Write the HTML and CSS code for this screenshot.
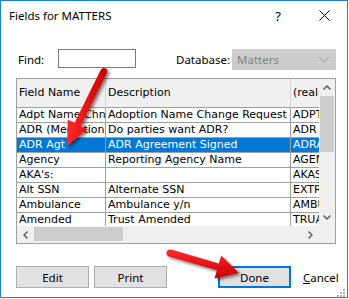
FILE: index.html
```html
<!DOCTYPE html>
<html lang="en">
<head>
  <meta charset="UTF-8">
  <title>Fields for MATTERS</title>
  <link rel="stylesheet" href="styles.css">
</head>
<body>
  <div class="window">
    <div class="titlebar">
      <span class="title">Fields for MATTERS</span>
      <span class="caption-btn">?</span>
      <span class="caption-btn">
        <svg width="11" height="11" viewBox="0 0 11 11"><path d="M0.5 0.5 L10.5 10.5 M10.5 0.5 L0.5 10.5" stroke="#000" stroke-width="1"/></svg>
      </span>
    </div>

    <div class="find-row">
      <span class="find-label">Find:</span>
      <input type="text" class="find-input">
      <span class="db-label">Database:</span>
      <div class="db-select">
        <span class="db-value">Matters</span>
        <svg width="10" height="6" viewBox="0 0 10 6"><path d="M0.5 0.5 L5 5 L9.5 0.5" fill="none" stroke="#a3a3a3" stroke-width="1"/></svg>
      </div>
    </div>

    <div class="grid">
      <div class="viewport">
        <div class="row head">
          <div class="cell">Field Name</div>
          <div class="cell">Description</div>
          <div class="cell">(real name)</div>
        </div>
        <div class="row"><div class="cell">Adpt Name Chng</div><div class="cell">Adoption Name Change Request</div><div class="cell">ADPTNAME</div></div>
        <div class="row"><div class="cell">ADR (Mediation)</div><div class="cell">Do parties want ADR?</div><div class="cell">ADR</div></div>
        <div class="row selected"><div class="cell">ADR Agt</div><div class="cell">ADR Agreement Signed</div><div class="cell">ADRAGT</div></div>
        <div class="row"><div class="cell">Agency</div><div class="cell">Reporting Agency Name</div><div class="cell">AGENCY</div></div>
        <div class="row"><div class="cell">AKA's:</div><div class="cell"></div><div class="cell">AKAS</div></div>
        <div class="row"><div class="cell">Alt SSN</div><div class="cell">Alternate SSN</div><div class="cell">EXTRSSN</div></div>
        <div class="row"><div class="cell">Ambulance</div><div class="cell">Ambulance y/n</div><div class="cell">AMBULANCE</div></div>
        <div class="row"><div class="cell">Amended</div><div class="cell">Trust Amended</div><div class="cell">TRUAMEND</div></div>
      </div>

      <div class="vscroll">
        <div class="sb-btn">
          <svg width="8" height="5" viewBox="0 0 8 5"><path d="M0.5 4.5 L4 1 L7.5 4.5" fill="none" stroke="#606060" stroke-width="1.5"/></svg>
        </div>
        <div class="vthumb"></div>
        <div class="sb-track"></div>
        <div class="sb-btn">
          <svg width="8" height="5" viewBox="0 0 8 5"><path d="M0.5 0.5 L4 4 L7.5 0.5" fill="none" stroke="#606060" stroke-width="1.5"/></svg>
        </div>
      </div>

      <div class="hscroll">
        <div class="sb-btn">
          <svg width="5" height="8" viewBox="0 0 5 8"><path d="M4.5 0.5 L1 4 L4.5 7.5" fill="none" stroke="#606060" stroke-width="1.5"/></svg>
        </div>
        <div class="hthumb"></div>
        <div class="sb-track"></div>
        <div class="sb-btn">
          <svg width="5" height="8" viewBox="0 0 5 8"><path d="M0.5 0.5 L4 4 L0.5 7.5" fill="none" stroke="#606060" stroke-width="1.5"/></svg>
        </div>
      </div>

      <div class="corner"></div>
    </div>

    <div class="buttons">
      <button class="btn">Edit</button>
      <button class="btn btn-print">Print</button>
      <button class="btn btn-done">Done</button>
      <span class="cancel"><u>C</u>ancel</span>
    </div>
  </div>

  <svg class="grip" width="8" height="8" viewBox="0 0 8 8">
    <rect x="6" y="0" width="2" height="2" fill="#b4b4b4"/>
    <rect x="3" y="3" width="2" height="2" fill="#b4b4b4"/>
    <rect x="6" y="3" width="2" height="2" fill="#b4b4b4"/>
    <rect x="0" y="6" width="2" height="2" fill="#b4b4b4"/>
    <rect x="3" y="6" width="2" height="2" fill="#b4b4b4"/>
    <rect x="6" y="6" width="2" height="2" fill="#b4b4b4"/>
  </svg>

  <!-- red callout arrows drawn over the dialog -->
  <svg class="arrows" width="349" height="299" viewBox="0 0 349 299">
    <defs>
      <linearGradient id="redA" x1="0" y1="0" x2="1" y2="0">
        <stop offset="0" stop-color="#ff2a2a"/>
        <stop offset="1" stop-color="#c80000"/>
      </linearGradient>
      <linearGradient id="redB" x1="0" y1="0" x2="0" y2="1">
        <stop offset="0" stop-color="#ff2a2a"/>
        <stop offset="1" stop-color="#c80000"/>
      </linearGradient>
      <filter id="shadow" x="-20%" y="-20%" width="140%" height="140%">
        <feDropShadow dx="2" dy="2" stdDeviation="1.5" flood-color="#000" flood-opacity="0.5"/>
      </filter>
    </defs>
    <path filter="url(#shadow)" fill="url(#redA)"
          d="M107.1 72.6 L80.8 126 L87.5 129.3 L67 146 L67.8 119.6 L74.5 122.9 L100.9 69.5 A3.5 3.5 0 0 1 107.1 72.6 Z"/>
    <path filter="url(#shadow)" fill="url(#redB)"
          d="M169 256.4 L216.9 270.2 L214.5 278.4 L239 273 L221.2 255.4 L218.8 263.5 L171 249.6 A3.5 3.5 0 0 0 169 256.4 Z"/>
  </svg>
</body>
</html>
```

FILE: styles.css
```css
body {
  margin: 0;
  width: 349px;
  height: 299px;
  position: relative;
  overflow: hidden;
  background: #fff;
  color: #000;
  font-family: "Noto Sans", "Liberation Sans", sans-serif;
  font-size: 11.5px;
}
.window {
  width: 348px;
  height: 298px;
  box-sizing: border-box;
  border: 1px solid #1883d7;
  display: flex;
  flex-direction: column;
}
.titlebar {
  height: 29px;
  display: flex;
  align-items: center;
  padding-left: 8px;
}
.title {
  flex: 1;
}
.caption-btn {
  width: 46px;
  height: 29px;
  display: flex;
  align-items: center;
  justify-content: center;
  font-size: 13px;
}
.find-row {
  margin-top: 19px;
  height: 21px;
  padding: 0 11px 0 17px;
  display: flex;
  align-items: center;
}
.find-label {
  width: 40px;
}
.find-input {
  align-self: flex-start;
  width: 78px;
  height: 19px;
  box-sizing: border-box;
  margin: 0;
  padding: 0;
  border: 1px solid #7a7a7a;
  background: #fff;
}
.db-label {
  margin-left: 40px;
  flex: 1;
  white-space: nowrap;
}
.db-select {
  width: 104px;
  height: 21px;
  box-sizing: border-box;
  background: #cccccc;
  border: 1px solid #cccccc;
  display: flex;
  align-items: center;
  justify-content: space-between;
  padding: 0 6px 0 4px;
  color: #838383;
}
.grid {
  margin: 8px 0 0 15px;
  width: 320px;
  height: 166px;
  box-sizing: border-box;
  border: 1px solid #a0a0a0;
  display: grid;
  grid-template-columns: 1fr 16px;
  grid-template-rows: 1fr 17px;
  font-family: "DejaVu Sans", Verdana, sans-serif;
  font-size: 11px;
}
.viewport {
  overflow: hidden;
  background: #fff;
}
.row {
  display: grid;
  grid-template-columns: 89px 185px 80px;
  height: 15px;
}
.cell {
  box-sizing: border-box;
  border-right: 1px solid #a0a0a0;
  border-bottom: 1px solid #a0a0a0;
  padding-left: 2px;
  line-height: 14px;
  white-space: nowrap;
  overflow: hidden;
}
.head {
  height: 29px;
  background: #f0f0f0;
}
.head .cell {
  line-height: 28px;
  border-right-color: #d5d5d5;
}
.selected {
  background: #0078d7;
  color: #fff;
}
.vscroll {
  background: #f0f0f0;
  display: flex;
  flex-direction: column;
}
.hscroll {
  background: #f0f0f0;
  display: flex;
}
.sb-btn {
  flex: 0 0 17px;
  display: flex;
  align-items: center;
  justify-content: center;
}
.sb-track {
  flex: 1;
}
.vthumb {
  margin-left: 1px;
  width: 14px;
  height: 56px;
  background: #cdcdcd;
}
.hthumb {
  margin-top: 1px;
  width: 89px;
  height: 14px;
  background: #cdcdcd;
}
.corner {
  background: #f0f0f0;
}
.buttons {
  margin-top: 22px;
  padding-left: 15px;
  display: flex;
  align-items: center;
}
.btn {
  width: 73px;
  height: 22px;
  margin: 0;
  padding: 0;
  box-sizing: border-box;
  border: 1px solid #adadad;
  background: #e1e1e1;
  color: #000;
  font-family: inherit;
  font-size: 11.5px;
}
.btn-print {
  margin-left: 5px;
}
.btn-done {
  margin-left: 51px;
  border: 2px solid #0078d7;
}
.cancel {
  margin-left: 12px;
}
.grip {
  position: absolute;
  left: 337px;
  top: 289px;
}
.arrows {
  position: absolute;
  left: 0;
  top: 0;
  pointer-events: none;
}
```
